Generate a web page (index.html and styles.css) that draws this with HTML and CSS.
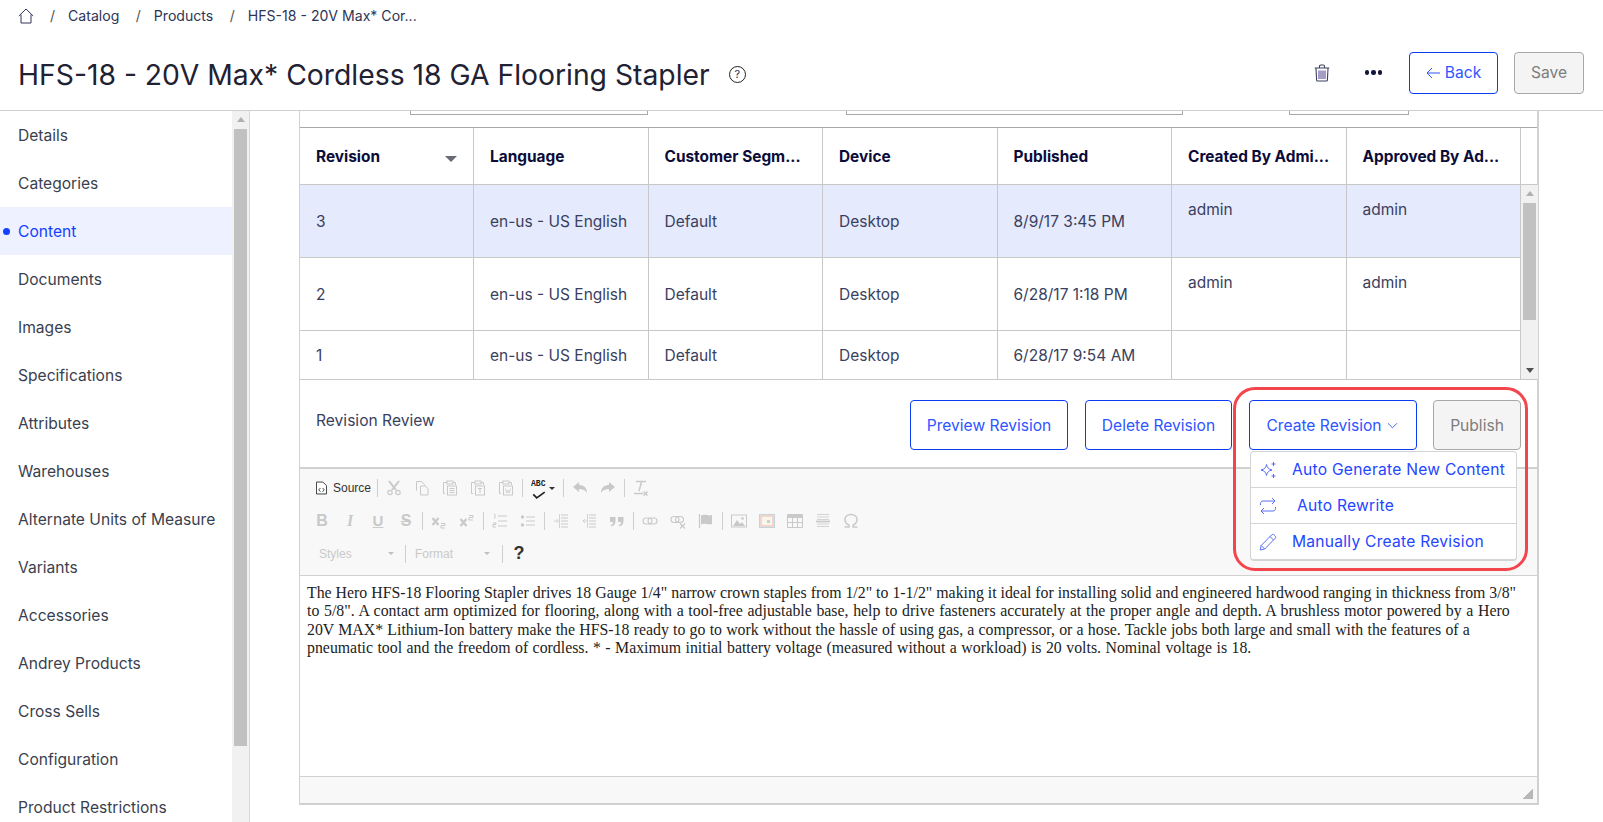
FILE: index.html
```html
<!DOCTYPE html>
<html lang="en">
<head>
<meta charset="utf-8">
<title>HFS-18 - Content</title>
<link rel="stylesheet" href="styles.css">
</head>
<body>
<svg class="defs" width="0" height="0" aria-hidden="true">
  <symbol id="cut" viewBox="0 0 16 16"><path d="M3 1l7 9M13 1l-7 9" fill="none" stroke="currentColor" stroke-width="2"/><circle cx="4" cy="12.5" r="2.2" fill="none" stroke="currentColor" stroke-width="1.2"/><circle cx="12" cy="12.5" r="2.2" fill="none" stroke="currentColor" stroke-width="1.2"/></symbol>
  <symbol id="copy" viewBox="0 0 16 16"><path d="M2.5 10.5v-9h5l3 3v1M6.5 6h5l2.5 2.500v6.500h-7.500z" fill="none" stroke="currentColor"/></symbol>
  <symbol id="paste" viewBox="0 0 16 16"><path d="M3 13.500H1.500v-11H5M11 2.500h2.500V5" fill="none" stroke="currentColor"/><rect x="5" y="1" width="6" height="3" fill="none" stroke="currentColor"/><rect x="5.500" y="6" width="9" height="9" fill="none" stroke="currentColor"/><path d="M7.500 8.500h5M7.500 10.500h5M7.500 12.500h5" stroke="currentColor"/></symbol>
  <symbol id="pastet" viewBox="0 0 16 16"><path d="M3 13.500H1.500v-11H5M11 2.500h2.500V5" fill="none" stroke="currentColor"/><rect x="5" y="1" width="6" height="3" fill="none" stroke="currentColor"/><rect x="5.500" y="6" width="9" height="9" fill="none" stroke="currentColor"/><path d="M8 8.500h4M10 8.500v4.500" stroke="currentColor"/></symbol>
  <symbol id="pastew" viewBox="0 0 16 16"><path d="M3 13.500H1.500v-11H5M11 2.500h2.500V5" fill="none" stroke="currentColor"/><rect x="5" y="1" width="6" height="3" fill="none" stroke="currentColor"/><rect x="5.500" y="6" width="9" height="9" fill="none" stroke="currentColor"/><path d="M7.500 8.500l1.200 4.500 1.300-3 1.300 3 1.200-4.500" fill="none" stroke="currentColor" stroke-width=".8"/></symbol>
  <symbol id="undo" viewBox="0 0 16 16"><path d="M1 7l6-5v3c4 0 8 2 8 8-2-3-4-4-8-4v3z" fill="currentColor"/></symbol>
  <symbol id="redo" viewBox="0 0 16 16"><path d="M15 7L9 2v3C5 5 1 7 1 13c2-3 4-4 8-4v3z" fill="currentColor"/></symbol>
  <symbol id="rm" viewBox="0 0 16 16"><path d="M3 1.500h10M8.500 2L6 11M1 13.500h9M10.500 11.500l4 4M14.500 11.500l-4 4" fill="none" stroke="currentColor" stroke-width="1.500"/></symbol>
  <symbol id="sub" viewBox="0 0 16 16"><path d="M1.500 5l6 7M7.500 5l-6 7" stroke="currentColor" stroke-width="2.200"/><path d="M10 10.500h4v2h-4v2.500h4" fill="none" stroke="currentColor"/></symbol>
  <symbol id="sup" viewBox="0 0 16 16"><path d="M1.500 6l6 7M7.500 6l-6 7" stroke="currentColor" stroke-width="2.200"/><path d="M10 2.500h4v2h-4v2.500h4" fill="none" stroke="currentColor"/></symbol>
  <symbol id="ol" viewBox="0 0 16 16"><path d="M6 3h9M6 8h9M6 13h9" stroke="currentColor" stroke-width="1.200"/><path d="M2 1.500h1v4M1 10h3v1.500H1V14h3" fill="none" stroke="currentColor"/></symbol>
  <symbol id="ul" viewBox="0 0 16 16"><path d="M6 4h9M6 8h9M6 12h9" stroke="currentColor" stroke-width="1.200"/><circle cx="2.500" cy="4" r="1.700" fill="currentColor"/><circle cx="2.500" cy="12" r="1.700" fill="currentColor"/></symbol>
  <symbol id="ind" viewBox="0 0 16 16"><path d="M8 2h7M8 5h7M8 8h7M8 11h7M8 14h7" stroke="currentColor"/><path d="M1 8h4M3.500 6l2 2-2 2M6.500 1v14" fill="none" stroke="currentColor" stroke-width=".8"/></symbol>
  <symbol id="out" viewBox="0 0 16 16"><path d="M8 2h7M8 5h7M8 8h7M8 11h7M8 14h7" stroke="currentColor"/><path d="M6 8H2M4 6L2 8l2 2M6.500 1v14" fill="none" stroke="currentColor" stroke-width=".8"/></symbol>
  <symbol id="quote" viewBox="0 0 16 16"><path d="M1 4h5.500v4c0 3-1.500 4.500-4 5.500l-.7-1.300C3.500 11.500 4 10.500 4 9H1zM9 4h5.500v4c0 3-1.500 4.500-4 5.500l-.7-1.300c1.700-.7 2.200-1.700 2.200-3.200H9z" fill="currentColor"/></symbol>
  <symbol id="link" viewBox="0 0 16 16"><rect x="1" y="5" width="9" height="6" rx="3" fill="none" stroke="currentColor" stroke-width="1.100"/><rect x="6" y="5" width="9" height="6" rx="3" fill="none" stroke="currentColor" stroke-width="1.100"/></symbol>
  <symbol id="unlink" viewBox="0 0 16 16"><rect x="1" y="3.500" width="8" height="6" rx="3" fill="none" stroke="currentColor" stroke-width="1.100"/><rect x="5.500" y="3.500" width="8" height="6" rx="3" fill="none" stroke="currentColor" stroke-width="1.100"/><path d="M10 10.500l5 5M15 10.500l-5 5" stroke="currentColor" stroke-width="1.300"/></symbol>
  <symbol id="anchor" viewBox="0 0 16 16"><path d="M1.500 1v14" stroke="currentColor" stroke-width="1.200"/><path d="M3 2.500c4-2 7 1 11-.5v9c-4 1.500-7-1.500-11 .5z" fill="currentColor"/></symbol>
  <symbol id="image" viewBox="0 0 16 16"><rect x=".5" y="2" width="15" height="12" fill="none" stroke="currentColor"/><path d="M2 13l4-6 3 4 2-2 3 4z" fill="currentColor"/><circle cx="11.500" cy="5.500" r="1.300" fill="currentColor"/></symbol>
  <symbol id="flash" viewBox="0 0 16 16"><rect x=".5" y="1.500" width="15" height="13" fill="#eef3f5" stroke="#c3d5dc"/><rect x="2" y="3" width="12" height="10" fill="#f7f6ea" stroke="#f4b6a8"/><rect x="8" y="7" width="3" height="3" fill="#cfcfcf"/></symbol>
  <symbol id="table" viewBox="0 0 16 16"><path d="M.5 1.500h15v13H.5z" fill="none" stroke="currentColor"/><path d="M.5 2h15v3H.5z" fill="currentColor"/><path d="M.5 9.500h15M5.500 5v9M10.500 5v9" stroke="currentColor"/></symbol>
  <symbol id="hr" viewBox="0 0 16 16"><path d="M2 1.500h12M2 4h12M2 6.500h12M2 11h12M2 13.500h12" stroke="currentColor" stroke-width=".8"/><path d="M1 8.500h14" stroke="currentColor" stroke-width="1.800"/></symbol>
  <symbol id="omega" viewBox="0 0 16 16"><path d="M1.500 14h4.500v-1.800C3.500 11 2 9 2 6.500 2 3.500 4.500 1.500 8 1.500s6 2 6 5c0 2.500-1.500 4.500-4 5.700V14h4.500" fill="none" stroke="currentColor" stroke-width="1.500"/></symbol>
</svg>

<div class="page">
  <header class="top">
    <nav class="crumbs">
      <svg class="home" viewBox="0 0 16 16" width="16" height="16"><path d="M.8 8L8 1l7.200 7M3 6.500V15h10V6.500" fill="none" stroke="#30375a" stroke-width="1"/></svg>
      <span class="slash">/</span><span class="crumb">Catalog</span>
      <span class="slash">/</span><span class="crumb">Products</span>
      <span class="slash">/</span><span class="crumb">HFS-18 - 20V Max* Cor...</span>
    </nav>
    <div class="titlebar">
      <h1 class="title">HFS-18 - 20V Max* Cordless 18 GA Flooring Stapler</h1>
      <span class="help">?</span>
      <div class="actions">
        <svg class="trash" viewBox="0 0 16 18" width="16" height="18"><path d="M.8 4h14.400M5.500 3.500V2.200c0-.7.500-1.200 1.200-1.200h2.600c.7 0 1.200.5 1.200 1.200v1.300M2 4.500l.6 11.500c0 .6.500 1 1 1h8.800c.5 0 1-.4 1-1L14 4.500" fill="none" stroke="#3a4060" stroke-width="1.100"/><path d="M5 6.500V15M7 6.500V15M9 6.500V15M11 6.500V15" stroke="#4a3a90" stroke-width="1"/></svg>
        <span class="dots"><i></i><i></i><i></i></span>
        <button class="btn btn-back"><svg viewBox="0 0 14 12" width="14" height="12"><path d="M14 6H1M6 1L1 6l5 5" fill="none" stroke="currentColor"/></svg>Back</button>
        <button class="btn btn-off btn-save">Save</button>
      </div>
    </div>
  </header>

  <div class="body">
    <aside class="side">
      <ul class="nav">
        <li>Details</li><li>Categories</li><li class="on">Content</li><li>Documents</li><li>Images</li><li>Specifications</li><li>Attributes</li><li>Warehouses</li><li>Alternate Units of Measure</li><li>Variants</li><li>Accessories</li><li>Andrey Products</li><li>Cross Sells</li><li>Configuration</li><li>Product Restrictions</li>
      </ul>
      <div class="side-scroll"><span class="arrow-up"></span><span class="side-thumb"></span></div>
    </aside>

    <main class="main">
      <section class="card">
        <div class="stubs"><span class="stub s1"></span><span class="stub s2"></span><span class="stub s3"></span></div>

        <div class="grid-head">
          <div class="th c1">Revision<span class="sort"></span></div>
          <div class="th">Language</div>
          <div class="th">Customer Segm...</div>
          <div class="th">Device</div>
          <div class="th">Published</div>
          <div class="th">Created By Admi...</div>
          <div class="th">Approved By Ad...</div>
          <div class="th th-end"></div>
        </div>
        <div class="grid-body">
          <div class="rows">
            <div class="row sel"><div class="td c1">3</div><div class="td">en-us - US English</div><div class="td">Default</div><div class="td">Desktop</div><div class="td">8/9/17 3:45 PM</div><div class="td td-top">admin</div><div class="td td-top">admin</div></div>
            <div class="row"><div class="td c1">2</div><div class="td">en-us - US English</div><div class="td">Default</div><div class="td">Desktop</div><div class="td">6/28/17 1:18 PM</div><div class="td td-top">admin</div><div class="td td-top">admin</div></div>
            <div class="row last"><div class="td c1">1</div><div class="td">en-us - US English</div><div class="td">Default</div><div class="td">Desktop</div><div class="td">6/28/17 9:54 AM</div><div class="td td-top"></div><div class="td td-top"></div></div>
          </div>
          <div class="vscroll"><span class="arrow-up"></span><span class="v-thumb"></span><span class="arrow-down"></span></div>
        </div>

        <div class="review">
          <span class="review-label">Revision Review</span>
          <div class="review-actions">
            <button class="btn btn-line b-preview">Preview Revision</button>
            <button class="btn btn-line b-delete">Delete Revision</button>
            <button class="btn btn-line b-create">Create Revision<svg viewBox="0 0 12 7" width="11" height="7"><path d="M1 1l5 5 5-5" fill="none" stroke="currentColor"/></svg></button>
            <button class="btn btn-off b-publish">Publish</button>
          </div>
        </div>

        <div class="editor">
          <div class="toolbar">
            <div class="tb-row">
              <span class="tb-source"><svg class="src" viewBox="0 0 12 14" width="11" height="14"><path d="M.5.500h7l4 4v9H.5z" fill="#fff" stroke="#333"/><path d="M4.800 7L3 9l1.800 2M7.200 7L9 9l-1.800 2" fill="none" stroke="#333"/></svg>Source</span>
              <i class="sep"></i>
              <span class="b"><svg><use href="#cut"/></svg></span><span class="b"><svg><use href="#copy"/></svg></span><span class="b"><svg><use href="#paste"/></svg></span><span class="b"><svg><use href="#pastet"/></svg></span><span class="b"><svg><use href="#pastew"/></svg></span>
              <i class="sep"></i>
              <span class="b b-spell"><span class="abc">ABC</span><svg class="check" viewBox="0 0 14 7" width="14" height="7"><path d="M2 3l3 3 7-5" fill="none" stroke="#222" stroke-width="1.500"/></svg><span class="caret dark"></span></span>
              <i class="sep"></i>
              <span class="b"><svg><use href="#undo"/></svg></span><span class="b"><svg><use href="#redo"/></svg></span>
              <i class="sep"></i>
              <span class="b"><svg><use href="#rm"/></svg></span>
            </div>
            <div class="tb-row">
              <span class="b fmt bold">B</span><span class="b fmt ital">I</span><span class="b fmt under">U</span><span class="b fmt strike">S</span>
              <i class="sep"></i>
              <span class="b"><svg><use href="#sub"/></svg></span><span class="b"><svg><use href="#sup"/></svg></span>
              <i class="sep"></i>
              <span class="b"><svg><use href="#ol"/></svg></span><span class="b"><svg><use href="#ul"/></svg></span>
              <i class="sep"></i>
              <span class="b"><svg><use href="#ind"/></svg></span><span class="b"><svg><use href="#out"/></svg></span><span class="b"><svg><use href="#quote"/></svg></span>
              <i class="sep"></i>
              <span class="b"><svg><use href="#link"/></svg></span><span class="b"><svg><use href="#unlink"/></svg></span><span class="b"><svg><use href="#anchor"/></svg></span>
              <i class="sep"></i>
              <span class="b"><svg><use href="#image"/></svg></span><span class="b"><svg><use href="#flash"/></svg></span><span class="b"><svg><use href="#table"/></svg></span><span class="b"><svg><use href="#hr"/></svg></span><span class="b"><svg><use href="#omega"/></svg></span>
            </div>
            <div class="tb-row">
              <span class="combo c-styles">Styles<span class="caret"></span></span>
              <i class="sep"></i>
              <span class="combo c-format">Format<span class="caret"></span></span>
              <i class="sep"></i>
              <span class="b q">?</span>
            </div>
          </div>
          <div class="editor-text">
            <span class="ln">The Hero HFS-18 Flooring Stapler drives 18 Gauge 1/4" narrow crown staples from 1/2" to 1-1/2" making it ideal for installing solid and engineered hardwood ranging in thickness from 3/8"</span>
            <span class="ln ln2">to 5/8". A contact arm optimized for flooring, along with a tool-free adjustable base, help to drive fasteners accurately at the proper angle and depth. A brushless motor powered by a Hero</span>
            <span class="ln ln3">20V MAX* Lithium-Ion battery make the HFS-18 ready to go to work without the hassle of using gas, a compressor, or a hose. Tackle jobs both large and small with the features of a</span>
            <span class="ln ln4">pneumatic tool and the freedom of cordless. * - Maximum initial battery voltage (measured without a workload) is 20 volts. Nominal voltage is 18.</span>
          </div>
          <div class="editor-foot"><span class="grip"></span></div>
        </div>

        <div class="callout"></div>
        <ul class="menu">
          <li><svg viewBox="0 0 18 18" width="18" height="18"><path d="M7.500 3.500c.8 3.500 2 4.700 5.500 5.500-3.500.8-4.700 2-5.500 5.500C6.700 11 5.500 9.800 2 9c3.500-.8 4.700-2 5.500-5.500zM14.500 1v4M12.500 3h4M14.500 13v4M12.500 15h4" fill="none" stroke="currentColor"/></svg><span>Auto Generate New Content</span></li>
          <li><svg viewBox="0 0 18 18" width="18" height="18"><path d="M1.500 8V6.500c0-1.500 1-2.500 2.500-2.500h12M13 1l3 3-3 3M16.500 10v1.500c0 1.500-1 2.500-2.500 2.500H2M5 17l-3-3 3-3" fill="none" stroke="currentColor"/></svg><span class="shift">Auto Rewrite</span></li>
          <li><svg viewBox="0 0 18 18" width="18" height="18"><path d="M1.200 17l1-4.500L12.500 2c.8-.8 2-.8 2.700 0l.8.800c.8.800.8 2 0 2.700L5.700 16zM11 3.500l3.500 3.500M2.200 12.500l3.500 3.500" fill="none" stroke="currentColor"/></svg><span>Manually Create Revision</span></li>
        </ul>
      </section>
    </main>
  </div>
</div>
</body>
</html>
```
FILE: styles.css
```css
* { box-sizing: border-box; }
html, body { margin: 0; height: 100%; overflow: hidden; background: #fff; }
body { font-family: Inter, "Liberation Sans", sans-serif; color: #2b3050; }
.defs { position: absolute; }
.page { height: 822px; display: flex; flex-direction: column; }

.top { height: 111px; border-bottom: 1px solid #d0d0d0; flex: none; }
.crumbs { display: flex; align-items: center; height: 31px; padding-left: 18px; font-size: 14.1px; color: #2e3555; }
.home { margin-right: 16px; }
.slash { width: 18px; color: #555; }
.crumb { margin-right: 16.5px; }
.titlebar { display: flex; align-items: center; height: 79px; padding: 4px 19px 0 18px; }
.title { margin: 4px 0 0; font-size: 28.3px; font-weight: 400; color: #1f2233; white-space: nowrap; }
.help { width: 17px; height: 17px; margin: 4px 0 0 19px; border: 1.4px solid #222; border-radius: 50%; font-size: 11px; line-height: 14px; text-align: center; }
.actions { margin-left: auto; display: flex; align-items: center; }
.trash { margin-right: 35px; margin-left: 1px; }
.dots { display: flex; gap: 2px; margin-right: 27px; }
.dots i { width: 4.5px; height: 4.5px; border-radius: 50%; background: #12163a; }

.btn { font: 400 15.6px Inter, "Liberation Sans", sans-serif; border-radius: 4px; cursor: default; display: inline-flex; align-items: center; justify-content: center; padding: 0; background: #fff; }
.btn-back { width: 89px; height: 42px; border: 1px solid #0b3bf5; color: #2f55ff; gap: 5px; margin-right: 16px; }
.btn-off { border: 1px solid #a8a8a8; background: #f4f4f4; color: #7d7d7d; }
.btn-save { width: 70px; height: 42px; }
.btn-line { border: 1px solid #0b3bf5; color: #2f55ff; height: 50px; }

.body { flex: 1; display: flex; min-height: 0; }
.side { width: 250px; flex: none; display: flex; border-right: 1px solid #d8d8d8; overflow: hidden; }
.nav { list-style: none; margin: 0; padding: 0; width: 232px; flex: none; font-size: 15.6px; color: #3a3f4f; }
.nav li { height: 48px; line-height: 50px; padding-left: 18px; white-space: nowrap; }
.nav .on { background: #eef1ff; color: #1540ff; position: relative; }
.nav .on::before { content: ""; position: absolute; left: 3px; top: 21px; width: 7px; height: 7px; border-radius: 50%; background: #1540ff; }
.side-scroll { width: 17px; background: #f1f1f1; padding: 0 2px; display: flex; flex-direction: column; align-items: center; }
.arrow-up { width: 0; height: 0; margin: 6px 0 7px; border: 4px solid transparent; border-top: 0; border-bottom: 5px solid #b0b0b0; flex: none; }
.arrow-down { width: 0; height: 0; margin-top: auto; margin-bottom: 6px; border: 4px solid transparent; border-bottom: 0; border-top: 5px solid #505050; flex: none; }
.side-thumb { width: 13px; height: 617px; background: #c1c1c1; flex: none; }

.main { flex: 1; min-width: 0; padding-left: 49px; overflow: hidden; }
.card { position: relative; width: 1240px; height: 694px; display: flex; flex-direction: column; border: 2px solid #d1d1d1; border-top: 0; border-left-width: 1px; }
.stubs { height: 17px; flex: none; display: flex; border-bottom: 1px solid #a8a8a8; }
.stub { height: 4px; border: 1px solid #a8a8a8; border-top: 0; }
.s1 { width: 238px; margin-left: 110px; }
.s2 { width: 337px; margin-left: 198px; }
.s3 { width: 120px; margin-left: 106px; }

.grid-head { display: flex; height: 57px; flex: none; border-bottom: 1px solid #c8c8c8; }
.th { width: 174.5px; flex: none; display: flex; align-items: center; padding-left: 16px; font-weight: 700; font-size: 15.4px; color: #0c0c3a; border-right: 1px solid #c8c8c8; white-space: nowrap; }
.th.c1, .td.c1 { width: 174px; }
.th-end { width: 16.5px; padding: 0; border-right: 0; }
.sort { width: 0; height: 0; margin-left: auto; margin-right: 16px; margin-top: 5px; border: 6px solid transparent; border-top: 6px solid #686a78; border-bottom: 0; }
.grid-body { display: flex; height: 195px; flex: none; border-bottom: 1px solid #c8c8c8; }
.rows { width: 1221px; flex: none; }
.row { display: flex; height: 73px; border-bottom: 1px solid #c8c8c8; }
.row.last { height: 49px; border-bottom: 0; }
.row.sel { background: #e5eafd; }
.td { width: 174.5px; flex: none; display: flex; align-items: center; padding-left: 16px; font-size: 15.5px; color: #3a3f60; border-right: 1px solid #c8c8c8; white-space: nowrap; }
.td.td-top { align-items: flex-start; padding-top: 15px; }
.vscroll { width: 17px; flex: none; background: #f1f1f1; display: flex; flex-direction: column; align-items: center; }
.v-thumb { width: 13px; height: 117px; background: #c1c1c1; flex: none; }

.review { height: 87px; flex: none; display: flex; padding: 20px 16px 0 16px; justify-content: space-between; }
.review-label { font-size: 15.6px; color: #3a3f60; margin-top: 11px; }
.review-actions { display: flex; gap: 16px; }
.b-preview { width: 158px; }
.b-delete { width: 147px; margin: 0 1px; }
.b-create { width: 168px; gap: 5px; padding-right: 2px; }
.b-publish { width: 88px; height: 50px; }

.editor { flex: 1; min-height: 0; display: flex; flex-direction: column; border-top: 2px solid #d1d1d1; }
.toolbar { height: 107px; flex: none; background: #f8f8f8; border-bottom: 1px solid #d1d1d1; padding: 2px 0 0 8px; }
.tb-row { display: flex; align-items: center; height: 33px; }
.b { width: 28px; height: 24px; display: flex; align-items: center; justify-content: center; color: #c9c9c9; flex: none; position: relative; }
.b svg { width: 16px; height: 16px; }
.sep { width: 5px; height: 18px; flex: none; background: linear-gradient(#cfcfcf, #cfcfcf) center / 1px 100% no-repeat; }
.tb-source { width: 67px; display: flex; align-items: center; gap: 6px; padding-left: 8px; font: 12px "Liberation Sans", sans-serif; color: #333; }
.b-spell { width: 36px; justify-content: flex-start; padding-left: 4px; }
.abc { font: 700 9px/10px "Liberation Mono", monospace; color: #222; position: absolute; left: 6px; top: 3px; transform: scaleX(.9); transform-origin: left; }
.check { position: absolute; left: 6px; top: 11px; }
.caret { width: 0; height: 0; border: 3px solid transparent; border-top: 3px solid #c0c0c0; border-bottom: 0; }
.caret.dark { border-top-color: #333; position: absolute; right: 6px; top: 11px; }
.fmt { font-family: "Liberation Sans", sans-serif; font-size: 15px; }
.bold { font-weight: 700; font-size: 16px; }
.ital { font-family: "Liberation Serif", serif; font-style: italic; font-weight: 700; font-size: 16px; }
.under { text-decoration: underline; font-weight: 700; }
.strike { text-decoration: line-through; font-weight: 700; font-size: 16px; }
.combo { display: flex; align-items: center; justify-content: space-between; font: 12px "Liberation Sans", sans-serif; color: #c9c9c9; padding-left: 11px; padding-right: 9px; flex: none; }
.c-styles { width: 95px; }
.c-format { width: 92px; padding-left: 7px; padding-right: 10px; }
.q { font: 700 18px "Liberation Sans", sans-serif; color: #333; }

.editor-text { flex: 1; min-height: 0; padding: 8px 7px; font: 15.85px/18.4px "Liberation Serif", serif; color: #222; background: #fff; }
.ln { display: block; white-space: nowrap; }
.ln2 { word-spacing: .68px; }
.ln3 { word-spacing: .25px; }
.ln4 { word-spacing: .5px; }
.editor-foot { height: 27px; flex: none; background: #f8f8f8; border-top: 1px solid #d1d1d1; position: relative; }
.grip { position: absolute; right: 4px; bottom: 4px; width: 10px; height: 10px; background: linear-gradient(135deg, transparent 50%, #b8b8b8 50%); }

.callout { position: absolute; left: 933px; top: 276px; width: 295px; height: 184px; border: 3px solid #f4444c; border-radius: 22px; pointer-events: none; }
.menu { position: absolute; left: 950px; top: 340px; width: 267px; margin: 0; padding: 0; list-style: none; background: #fff; border: 1px solid #d4d4d4; border-bottom-width: 2px; border-radius: 4px; font-size: 15.6px; color: #2446ff; }
.menu li { height: 36px; display: flex; align-items: center; padding-left: 8px; gap: 15px; border-bottom: 1px solid #d4d4d4; white-space: nowrap; letter-spacing: .25px; }
.menu li:last-child { border-bottom: 0; height: 35px; }
.menu svg { flex: none; color: #5a70f0; }
.shift { margin-left: 5px; }
```
